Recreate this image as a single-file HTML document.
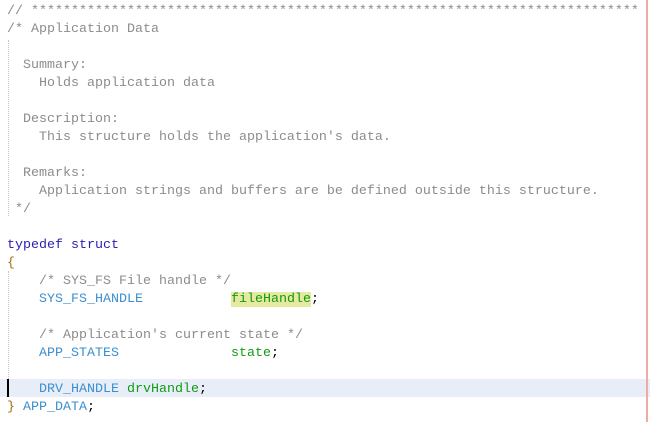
<!DOCTYPE html>
<html><head><style>
body{margin:0;width:650px;height:422px;background:#fff;overflow:hidden;position:relative}
pre{margin:0;position:absolute;left:7px;top:3px;font-family:"Liberation Mono",monospace;font-size:13.33px;line-height:18px;color:#000}
.c{color:#8c8c8c}.k{color:#2a1fb5}.t{color:#3a8fd0}.v{color:#129a12}.b{color:#a0700a}
.hl{background:#e6eaa0}
</style></head><body>
<div style="position:absolute;left:0;top:379px;width:650px;height:18px;background:#e8eef8"></div>
<div style="position:absolute;left:7px;top:379px;width:2px;height:18px;background:#000"></div>
<div style="position:absolute;left:646px;top:0;width:2px;height:422px;background:#f0aaa8"></div>
<div style="position:absolute;left:8px;top:40px;height:176px;border-left:1px dotted #c8c8c8"></div>
<div style="position:absolute;left:8px;top:271px;height:108px;border-left:1px dotted #c8c8c8"></div>
<pre><span class="c">// ****************************************************************************
/* Application Data

  Summary:
    Holds application data

  Description:
    This structure holds the application's data.

  Remarks:
    Application strings and buffers are be defined outside this structure.
 */</span>

<span class="k">typedef struct</span>
<span class="b">{</span>
    <span class="c">/* SYS_FS File handle */</span>
    <span class="t">SYS_FS_HANDLE</span>           <span class="v hl">fileHandle</span>;

    <span class="c">/* Application's current state */</span>
    <span class="t">APP_STATES</span>              <span class="v">state</span>;

    <span class="t">DRV_HANDLE</span> <span class="v">drvHandle</span>;
<span class="b">}</span> <span class="t">APP_DATA</span>;</pre>
</body></html>
